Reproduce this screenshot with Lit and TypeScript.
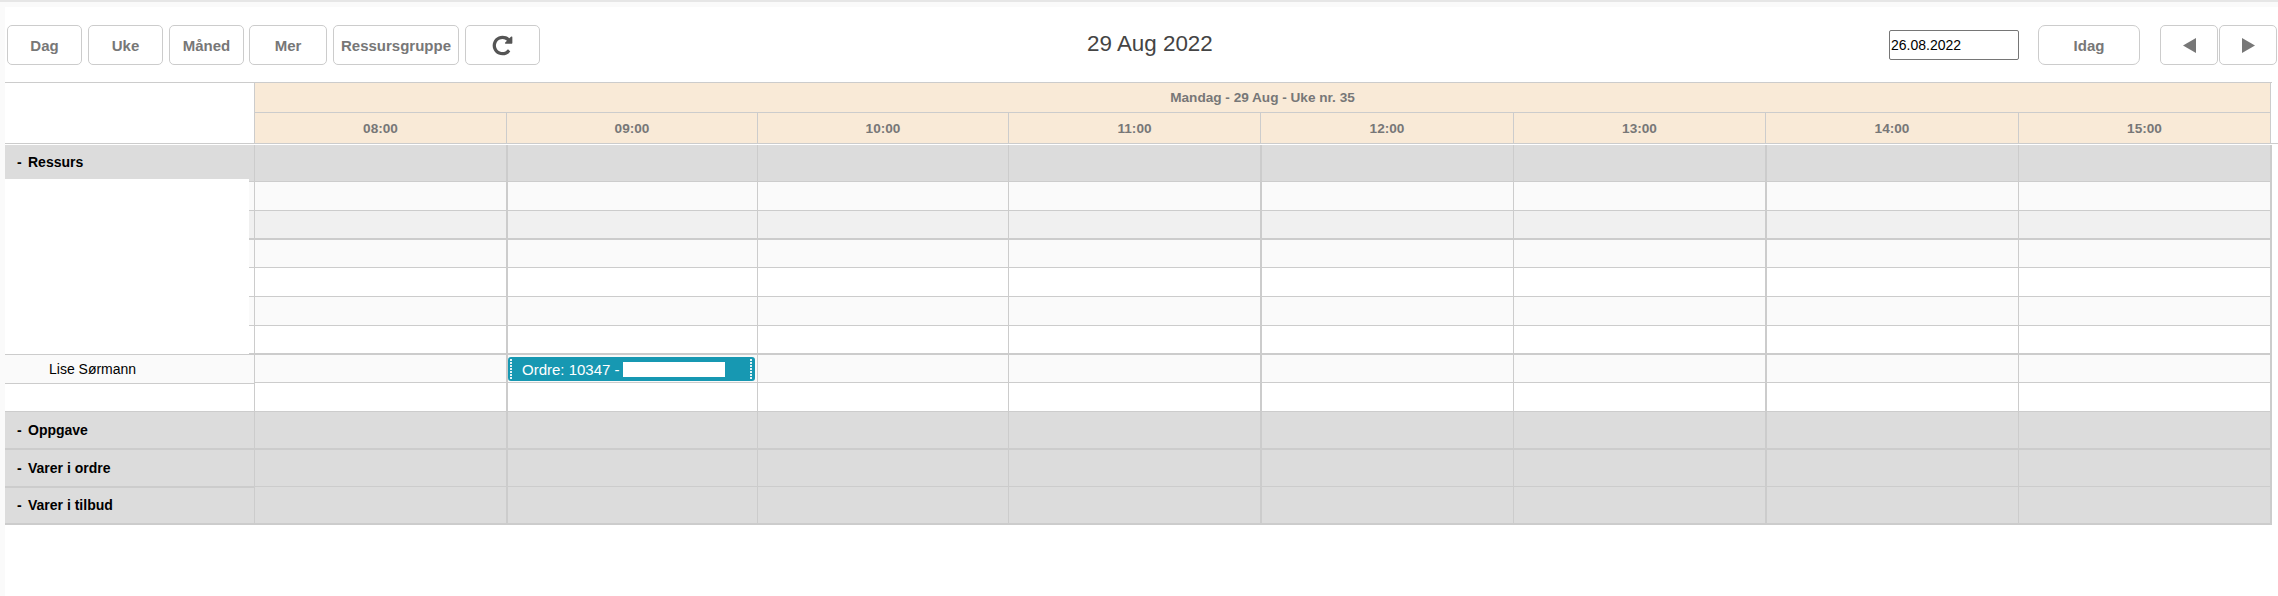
import { LitElement, html, css, nothing } from "lit";
import { customElement } from "lit/decorators.js";

const HOURS = ["08:00", "09:00", "10:00", "11:00", "12:00", "13:00", "14:00", "15:00"];
const THICK = new Set([1, 4, 6]);

interface Row {
  h: number;
  kind: "section" | "odd" | "alt" | "even";
  line: 1 | 2;
  label?: string;
  labelKind: "section" | "ressurs" | "mask" | "name" | "plain";
  event?: boolean;
  closes?: boolean;
  over?: boolean;
}

const ROWS: Row[] = [
  { h: 37, kind: "section", line: 1, label: "Ressurs", labelKind: "ressurs" },
  { h: 29, kind: "odd", line: 1, labelKind: "mask" },
  { h: 29, kind: "alt", line: 2, labelKind: "mask" },
  { h: 28, kind: "odd", line: 1, labelKind: "mask" },
  { h: 29, kind: "even", line: 1, labelKind: "mask" },
  { h: 29, kind: "odd", line: 1, labelKind: "mask" },
  { h: 29, kind: "even", line: 2, labelKind: "mask", closes: true },
  { h: 28, kind: "odd", line: 1, label: "Lise Sørmann", labelKind: "name", event: true },
  { h: 29, kind: "even", line: 1, labelKind: "plain" },
  { h: 38, kind: "section", line: 2, label: "Oppgave", labelKind: "section" },
  { h: 37, kind: "section", line: 1, label: "Varer i ordre", labelKind: "section", over: true },
  { h: 38, kind: "section", line: 2, label: "Varer i tilbud", labelKind: "section" },
];

@customElement("app-root")
export class AppRoot extends LitElement {
  static styles = css`
    :host {
      display: block;
      height: 596px;
      overflow: hidden;
      box-sizing: border-box;
      background: #fafafa;
      border-top: 2px solid #e6e6e6;
      padding: 5px 0 0 5px;
      font-family: "Liberation Sans", Arial, sans-serif;
      --line: #cccccc;
      --cols: 252px 251px 251px 252px 253px 252px 253px 252px;
    }
    .content {
      background: #fff;
      height: 589px;
    }
    .toolbar {
      display: flex;
      align-items: center;
      box-sizing: border-box;
      height: 75px;
      padding: 18px 1px 17px 2px;
    }
    .group {
      display: flex;
      gap: 6px;
    }
    .btn {
      display: flex;
      align-items: center;
      justify-content: center;
      box-sizing: border-box;
      width: 75px;
      height: 40px;
      padding: 0;
      background: #fff;
      border: 1px solid var(--line);
      border-radius: 5px;
      color: #777;
      font: bold 15px "Liberation Sans", Arial, sans-serif;
    }
    .btn.mer { width: 78px; margin-left: -1px; }
    .btn.group-btn { width: 126px; }
    .btn.today { width: 102px; border-radius: 7px; margin: 0 20px 0 19px; }
    .btn.nav { width: 58px; }
    .btn svg { display: block; }
    .title {
      margin: 0 0 2px 547px;
      color: #444;
      font-size: 22.4px;
      line-height: 26px;
      white-space: nowrap;
    }
    .right {
      display: flex;
      align-items: center;
      margin-left: auto;
    }
    .nav-group { display: flex; gap: 1px; }
    .date {
      box-sizing: border-box;
      width: 130px;
      height: 30px;
      padding: 1px;
      border: 1px solid #767676;
      border-radius: 2px;
      background: #fff;
      color: #000;
      font: 14px "Liberation Sans", Arial, sans-serif;
    }
    .head {
      border-bottom: 1px solid var(--line);
      margin-bottom: 1px;
    }
    .head-inner {
      display: flex;
      width: 2267px;
      border-top: 1px solid var(--line);
    }
    .head-left { width: 249px; flex: none; background: #fff; }
    .head-right {
      width: 2017px;
      flex: none;
      box-sizing: border-box;
      border-right: 1px solid var(--line);
      background: #f9ead7;
      color: #777;
      font-weight: bold;
      font-size: 13.6px;
    }
    .day {
      display: flex;
      align-items: center;
      justify-content: center;
      box-sizing: border-box;
      height: 30px;
      border-left: 1px solid var(--line);
      border-bottom: 1px solid var(--line);
    }
    .hours {
      display: grid;
      grid-template-columns: var(--cols);
      height: 30px;
    }
    .hour {
      display: flex;
      align-items: center;
      justify-content: center;
      border-left: 1px solid var(--line);
    }
    .row {
      display: grid;
      grid-template-columns: 249px var(--cols);
      width: 2267px;
      box-sizing: border-box;
      border-right: 2px solid var(--line);
    }
    .row.section { background: #dcdcdc; }
    .row.odd { background: #fafafa; }
    .row.alt { background: #f0f0f0; }
    .row.even { background: #fff; }
    .cell {
      position: relative;
      box-sizing: border-box;
      border-left: 1px solid var(--line);
      border-bottom: 1px solid var(--line);
    }
    .cell.thick { border-left-width: 2px; }
    .line-2 .cell, .line-2 .strip, .line-2 .label-line { border-bottom-width: 2px; }
    .label {
      display: flex;
      min-width: 0;
    }
    .label-line {
      flex: 1;
      display: flex;
      align-items: center;
      box-sizing: border-box;
      border-bottom: 1px solid var(--line);
      color: #000;
      font-size: 14px;
    }
    .label-line.over {
      position: relative;
      z-index: 1;
      margin-bottom: -1px;
      border-bottom-width: 2px;
    }
    .label-line b { font-weight: bold; }
    .dash { width: 11px; margin-left: 12px; font-weight: bold; }
    .mask { width: 244px; flex: none; box-sizing: border-box; background: #fff; }
    .mask.closes { border-bottom: 1px solid var(--line); margin-bottom: 0; }
    .strip {
      flex: 1;
      box-sizing: border-box;
      border-bottom: 1px solid var(--line);
    }
    .ressurs-title {
      display: flex;
      align-items: center;
      height: 34px;
      background: #dcdcdc;
      color: #000;
      font-size: 14px;
    }
    .label-line.name {
      position: relative;
      z-index: 1;
      padding-left: 44px;
      margin-bottom: -1px;
      white-space: nowrap;
    }
    .event {
      position: absolute;
      left: 0;
      top: 2px;
      z-index: 2;
      display: flex;
      align-items: center;
      box-sizing: border-box;
      width: 247px;
      height: 24px;
      background: #1798b2;
      border-radius: 3px;
      color: #fff;
      font-size: 15px;
      white-space: nowrap;
    }
    .handle {
      flex: none;
      width: 2px;
      height: 20px;
      background: repeating-linear-gradient(to bottom, #e4f3f6 0 2px, #1798b2 2px 3px);
    }
    .handle.start { margin-left: 2px; }
    .handle.end { margin: 0 3px 0 auto; }
    .event-text { margin-left: 10px; }
    .redacted {
      flex: none;
      width: 102px;
      height: 15px;
      margin-left: 3px;
      background: #fff;
    }
  `;

  private renderLabel(r: Row) {
    switch (r.labelKind) {
      case "ressurs":
        return html`<div class="label">
          <div class="mask">
            <div class="ressurs-title"><span class="dash">-</span><b>${r.label}</b></div>
          </div>
          <div class="strip"></div>
        </div>`;
      case "mask":
        return html`<div class="label">
          <div class="mask ${r.closes ? "closes" : ""}"></div>
          <div class="strip"></div>
        </div>`;
      case "name":
        return html`<div class="label"><div class="label-line name">${r.label}</div></div>`;
      case "section":
        return html`<div class="label">
          <div class="label-line ${r.over ? "over" : ""}"><span class="dash">-</span><b>${r.label}</b></div>
        </div>`;
      default:
        return html`<div class="label"><div class="label-line"></div></div>`;
    }
  }

  render() {
    return html`
      <div class="content">
        <div class="toolbar">
          <div class="group">
            <button class="btn">Dag</button>
            <button class="btn">Uke</button>
            <button class="btn">Måned</button>
            <button class="btn mer">Mer</button>
            <button class="btn group-btn">Ressursgruppe</button>
            <button class="btn" aria-label="Oppdater">
              <svg width="23" height="23" viewBox="0 0 1792 1792" fill="#555">
                <path d="M1664 256v448q0 26-19 45t-45 19h-448q-42 0-59-40-17-39 14-69l138-138q-148-137-349-137-104 0-198.5 40.5t-163.5 109.5-109.5 163.5-40.5 198.5 40.5 198.5 109.5 163.5 163.5 109.5 198.5 40.5q119 0 225-52t179-147q7-10 23-12 15 0 25 9l137 138q9 8 9.5 20.5t-7.5 22.5q-109 132-264 204.5t-327 72.5q-156 0-298-61t-245-164-164-245-61-298 61-298 164-245 245-164 298-61q147 0 284.5 55.5t244.5 156.5l130-129q29-31 70-14 39 17 39 59z"/>
              </svg>
            </button>
          </div>
          <div class="title">29 Aug 2022</div>
          <div class="right">
            <input class="date" type="text" .value=${"26.08.2022"} />
            <button class="btn today">Idag</button>
            <div class="nav-group">
              <button class="btn nav" aria-label="Forrige">
                <svg width="13" height="15" viewBox="0 0 13 15" fill="#777"><path d="M13 0v15L0 7.5z"/></svg>
              </button>
              <button class="btn nav" aria-label="Neste">
                <svg width="13" height="15" viewBox="0 0 13 15" fill="#777"><path d="M0 0v15l13-7.5z"/></svg>
              </button>
            </div>
          </div>
        </div>

        <div class="head">
          <div class="head-inner">
            <div class="head-left"></div>
            <div class="head-right">
              <div class="day">Mandag - 29 Aug - Uke nr. 35</div>
              <div class="hours">
                ${HOURS.map((h) => html`<div class="hour">${h}</div>`)}
              </div>
            </div>
          </div>
        </div>

        ${ROWS.map(
          (r) => html`
            <div class="row ${r.kind} line-${r.line}" style="height:${r.h}px">
              ${this.renderLabel(r)}
              ${HOURS.map(
                (_, i) => html`<div class="cell ${THICK.has(i) ? "thick" : ""}">
                  ${r.event && i === 1
                    ? html`<div class="event">
                        <span class="handle start"></span>
                        <span class="event-text">Ordre: 10347 -</span>
                        <span class="redacted"></span>
                        <span class="handle end"></span>
                      </div>`
                    : nothing}
                </div>`
              )}
            </div>
          `
        )}
      </div>
    `;
  }
}
